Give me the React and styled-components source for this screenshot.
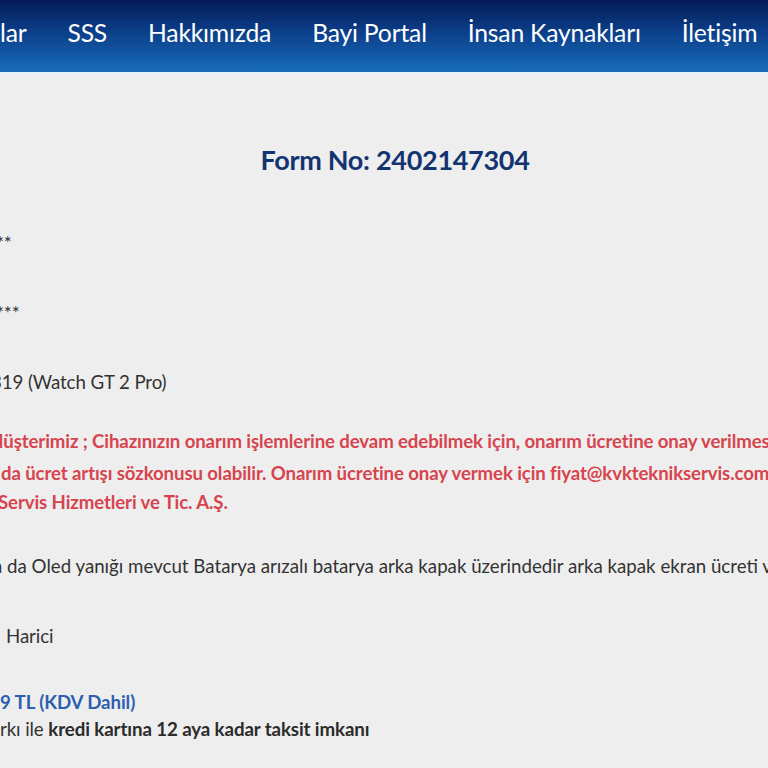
import React from 'react';
import styled, { createGlobalStyle } from 'styled-components';

const GlobalStyle = createGlobalStyle`
  * {
    box-sizing: border-box;
    margin: 0;
    padding: 0;
  }
  html, body {
    width: 100%;
    height: 100%;
    overflow: hidden;
    background: #eeeeee;
  }
  body {
    font-family: Lato, "Open Sans", Arial, sans-serif;
    color: #333;
  }
`;

const Header = styled.header`
  height: 74px;
  background: linear-gradient(to bottom, #041a56 0%, #0c3f8a 45%, #176cba 100%);
  border-bottom: 2px solid #e2f3f7;
  display: flex;
  align-items: center;
  overflow: hidden;
`;

const Nav = styled.nav`
  display: flex;
  align-items: center;
  gap: 41px;
  margin-left: 0;
  padding-bottom: 7px;
  white-space: nowrap;
`;

const NavLink = styled.a`
  font-size: 24.7px;
  color: #fff;
  text-decoration: none;
  letter-spacing: -0.2px;
`;

const Main = styled.main`
  overflow: hidden;
  padding-top: 70px;
`;

const Title = styled.h2`
  font-size: 27px;
  font-weight: 700;
  color: #123470;
  text-align: center;
  margin-left: 22px;
  letter-spacing: -0.3px;
  line-height: 32px;
  margin-bottom: 55px;
`;

const Line = styled.p`
  white-space: nowrap;
  font-size: 18.7px;
  line-height: 24px;
  color: ${(p) => p.$color || '#333'};
  font-weight: ${(p) => (p.$bold ? 700 : 400)};
  margin-left: ${(p) => p.$shift || 0}px;
  margin-top: ${(p) => p.$gap || 0}px;
  letter-spacing: ${(p) => p.$spacing || '-0.1px'};
`;

const Warning = styled.div`
  margin-top: 33px;
  color: #d7444d;
  font-weight: 700;
  font-size: 18.6px;
  line-height: 29px;
  white-space: nowrap;
`;

const WarnLine = styled.p`
  margin-left: ${(p) => p.$shift || 0}px;
  letter-spacing: -0.1px;
  margin-top: ${(p) => p.$gap || 0}px;
`;

const Strong = styled.b`
  font-weight: 700;
  color: #2b2b2b;
`;

const navItems = ['lar', 'SSS', 'Hakkımızda', 'Bayi Portal', 'İnsan Kaynakları', 'İletişim'];

export default function App() {
  return (
    <>
      <GlobalStyle />
      <Header>
        <Nav>
          {navItems.map((item) => (
            <NavLink key={item} href="#">{item}</NavLink>
          ))}
        </Nav>
      </Header>
      <Main>
        <Title>Form No: 2402147304</Title>
        <Line $shift={-4}>**</Line>
        <Line $shift={-4} $gap={46}>***</Line>
        <Line $shift={-9} $gap={45}>319 (Watch GT 2 Pro)</Line>
        <Warning>
          <WarnLine $shift={-14}>Müşterimiz ; Cihazınızın onarım işlemlerine devam edebilmek için, onarım ücretine onay verilmesi gerekmektedir.</WarnLine>
          <WarnLine $shift={1} $gap={3}>da ücret artışı sözkonusu olabilir. Onarım ücretine onay vermek için fiyat@kvkteknikservis.com adresine</WarnLine>
          <WarnLine $shift={-2}>Servis Hizmetleri ve Tic. A.Ş.</WarnLine>
        </Warning>
        <Line $shift={-7} $gap={37} $spacing="0px">a da Oled yanığı mevcut Batarya arızalı batarya arka kapak üzerindedir arka kapak ekran ücreti verilmiştir</Line>
        <Line $shift={6} $gap={46}>Harici</Line>
        <Line $shift={0} $gap={42} $bold $color="#2d5fae">9 TL (KDV Dahil)</Line>
        <Line $shift={0} $gap={3}>rkı ile <Strong>kredi kartına 12 aya kadar taksit imkanı</Strong></Line>
      </Main>
    </>
  );
}
